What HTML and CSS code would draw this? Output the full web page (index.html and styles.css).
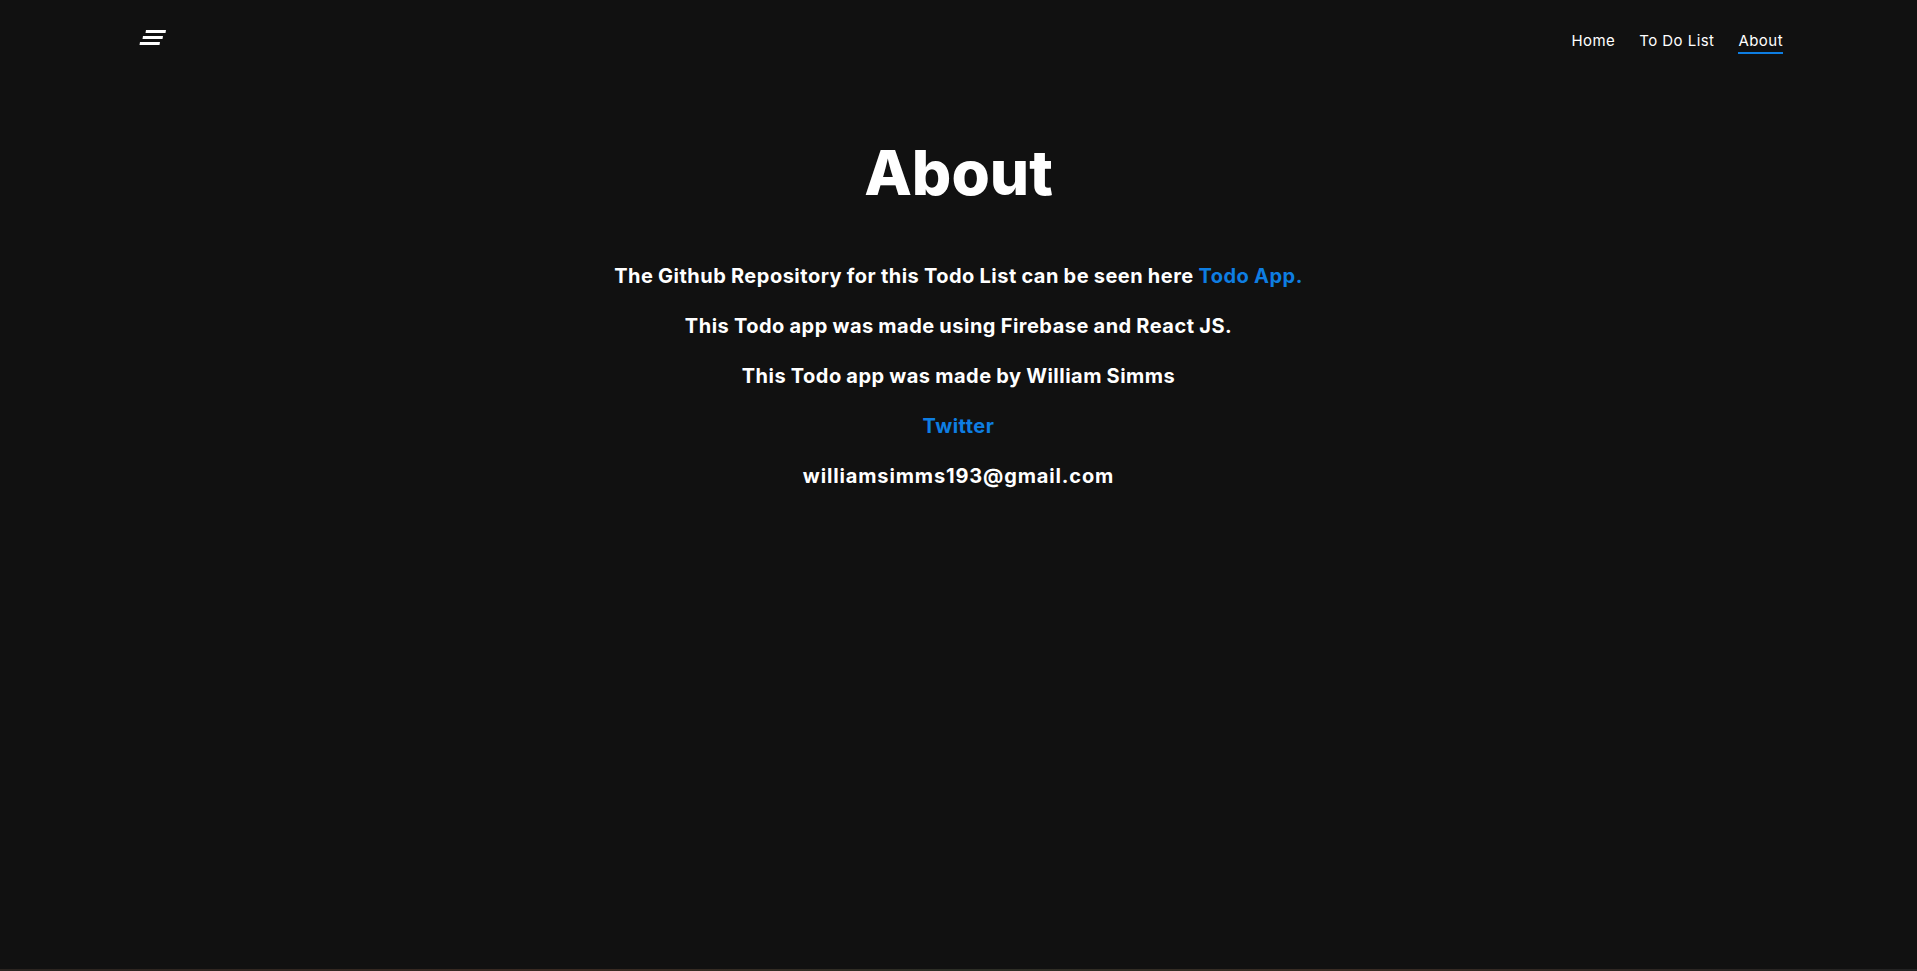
FILE: index.html
```html
<!DOCTYPE html>
<html lang="en">
<head>
<meta charset="utf-8">
<title>About</title>
<link rel="stylesheet" href="styles.css">
</head>
<body>
<div class="page">
  <header class="header">
    <a class="logo" href="#" aria-label="Menu">
      <svg width="28" height="16" viewBox="0 0 28 16">
        <polygon points="7,0 27,0 26.5,3 6.5,3" fill="#fff"/>
        <polygon points="4,6 24,6 23.5,9 3.5,9" fill="#fff"/>
        <polygon points="1,12 21,12 20.5,15 0.5,15" fill="#fff"/>
      </svg>
    </a>
    <nav class="nav">
      <a class="nav-link" href="#">Home</a>
      <a class="nav-link" href="#">To Do List</a>
      <a class="nav-link active" href="#">About</a>
    </nav>
  </header>
  <main class="about">
    <h1 class="title">About</h1>
    <p class="line">The Github Repository for this Todo List can be seen here <a class="link" href="#">Todo App.</a></p>
    <p class="line">This Todo app was made using Firebase and React JS.</p>
    <p class="line">This Todo app was made by William Simms</p>
    <p class="line"><a class="link" href="#">Twitter</a></p>
    <p class="line email">williamsimms193@gmail.com</p>
  </main>
  <div class="bottom-strip"></div>
</div>
</body>
</html>
```

FILE: styles.css
```css
* { box-sizing: border-box; }
html, body {
  margin: 0;
  padding: 0;
  height: 100%;
  background: #111111;
}
body {
  font-family: "Inter", "Open Sans", sans-serif;
  color: #ffffff;
}
.page {
  min-height: 100vh;
  display: flex;
  flex-direction: column;
}
.header {
  display: flex;
  justify-content: space-between;
  align-items: flex-start;
  padding: 30px 134px 0 139px;
}
.logo {
  display: block;
  line-height: 0;
}
.nav {
  display: flex;
  gap: 24px;
  padding-top: 1px;
}
.nav-link {
  color: #ffffff;
  text-decoration: none;
  font-size: 15px;
  font-weight: 400;
  letter-spacing: 0.45px;
  line-height: 20px;
  padding-bottom: 1px;
  border-bottom: 2px solid transparent;
}
.nav-link.active {
  border-bottom-color: #0e7ee2;
}
.about {
  flex: 1;
  text-align: center;
  padding-top: 79px;
}
.title {
  margin: 0 0 48px;
  font-size: 62px;
  font-weight: 800;
  line-height: 80px;
  letter-spacing: 0;
}
.line {
  margin: 0 0 19.9px;
  font-size: 20px;
  font-weight: 700;
  line-height: 30px;
  letter-spacing: 0.5px;
  word-spacing: -0.6px;
}
.email {
  letter-spacing: 0.85px;
}
.link {
  color: #0e7ee2;
  text-decoration: none;
}
.bottom-strip {
  height: 2px;
  background: linear-gradient(90deg, #2a2420, #3a2a22 30%, #2c2e26 50%, #3a2c24 70%, #222);
}
```
